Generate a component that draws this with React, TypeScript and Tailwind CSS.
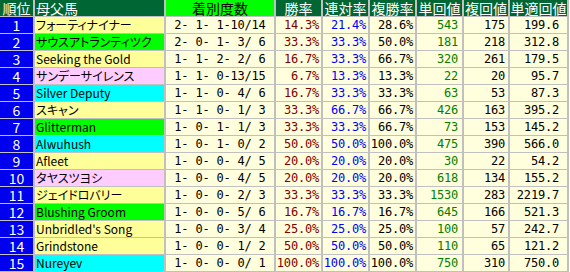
import React from 'react';

type Row = {
  name: string;
  bg: string;
  rec: string;
  win: string;
  ren: string;
  fuku: string;
  tan: string;
  fkv: string;
  tekiv: string;
};

const rows: Row[] = [
  { name: 'フォーティナイナー', bg: 'bg-[#ffff99]', rec: '2- 1- 1-10/14', win: '14.3%', ren: '21.4%', fuku: '28.6%', tan: '543', fkv: '175', tekiv: '199.6' },
  { name: 'サウスアトランティツク', bg: 'bg-[#00ff00]', rec: '2- 0- 1- 3/ 6', win: '33.3%', ren: '33.3%', fuku: '50.0%', tan: '181', fkv: '218', tekiv: '312.8' },
  { name: 'Seeking the Gold', bg: 'bg-[#ffff99]', rec: '1- 1- 2- 2/ 6', win: '16.7%', ren: '33.3%', fuku: '66.7%', tan: '320', fkv: '261', tekiv: '179.5' },
  { name: 'サンデーサイレンス', bg: 'bg-[#ffccff]', rec: '1- 1- 0-13/15', win: '6.7%', ren: '13.3%', fuku: '13.3%', tan: '22', fkv: '20', tekiv: '95.7' },
  { name: 'Silver Deputy', bg: 'bg-[#00ffff]', rec: '1- 1- 0- 4/ 6', win: '16.7%', ren: '33.3%', fuku: '33.3%', tan: '63', fkv: '53', tekiv: '87.3' },
  { name: 'スキャン', bg: 'bg-[#ffff99]', rec: '1- 1- 0- 1/ 3', win: '33.3%', ren: '66.7%', fuku: '66.7%', tan: '426', fkv: '163', tekiv: '395.2' },
  { name: 'Glitterman', bg: 'bg-[#00ff00]', rec: '1- 0- 1- 1/ 3', win: '33.3%', ren: '33.3%', fuku: '66.7%', tan: '73', fkv: '153', tekiv: '145.2' },
  { name: 'Alwuhush', bg: 'bg-[#00ffff]', rec: '1- 0- 1- 0/ 2', win: '50.0%', ren: '50.0%', fuku: '100.0%', tan: '475', fkv: '390', tekiv: '566.0' },
  { name: 'Afleet', bg: 'bg-[#ffff99]', rec: '1- 0- 0- 4/ 5', win: '20.0%', ren: '20.0%', fuku: '20.0%', tan: '30', fkv: '22', tekiv: '54.2' },
  { name: 'タヤスツヨシ', bg: 'bg-[#ffccff]', rec: '1- 0- 0- 4/ 5', win: '20.0%', ren: '20.0%', fuku: '20.0%', tan: '618', fkv: '134', tekiv: '155.2' },
  { name: 'ジェイドロバリー', bg: 'bg-[#ffff99]', rec: '1- 0- 0- 2/ 3', win: '33.3%', ren: '33.3%', fuku: '33.3%', tan: '1530', fkv: '283', tekiv: '2219.7' },
  { name: 'Blushing Groom', bg: 'bg-[#00ff00]', rec: '1- 0- 0- 5/ 6', win: '16.7%', ren: '16.7%', fuku: '16.7%', tan: '645', fkv: '166', tekiv: '521.3' },
  { name: "Unbridled's Song", bg: 'bg-[#ffff99]', rec: '1- 0- 0- 3/ 4', win: '25.0%', ren: '25.0%', fuku: '25.0%', tan: '100', fkv: '57', tekiv: '242.7' },
  { name: 'Grindstone', bg: 'bg-[#ffff99]', rec: '1- 0- 0- 1/ 2', win: '50.0%', ren: '50.0%', fuku: '50.0%', tan: '110', fkv: '65', tekiv: '121.2' },
  { name: 'Nureyev', bg: 'bg-[#00ffff]', rec: '1- 0- 0- 0/ 1', win: '100.0%', ren: '100.0%', fuku: '100.0%', tan: '750', fkv: '310', tekiv: '750.0' },
];

const jp = "font-['Noto_Sans_CJK_JP',sans-serif] overflow-hidden whitespace-nowrap";
const mono = "font-['DejaVu_Sans_Mono',monospace] text-[12px] tracking-[-0.2px] whitespace-pre overflow-hidden";
const head = `${jp} h-[16px] bg-[#006633] text-white text-[14px] leading-[16px] text-center`;
const num = `${mono} h-[16px] bg-[#ffffdd] leading-[16px] text-right pr-[2px]`;

export default function App() {
  return (
    <div className="w-[569px] bg-[#c0c0c0] grid grid-cols-[33px_129px_108px_45px_45px_45px_45px_44px_57px] gap-x-[2px] gap-y-[1px] pb-[1px]">
      {/* ヘッダー */}
      <div className={head}>順位</div>
      <div className={`${head} text-left pl-[1px]`}>母父馬</div>
      <div className={`${jp} h-[16px] bg-[#00ff00] text-black text-[14px] leading-[16px] text-center`}>着別度数</div>
      <div className={head}>勝率</div>
      <div className={head}>連対率</div>
      <div className={head}>複勝率</div>
      <div className={head}>単回値</div>
      <div className={head}>複回値</div>
      <div className={head}>単適回値</div>

      {rows.map((r, i) => (
        <React.Fragment key={i}>
          <div className={`${jp} h-[16px] bg-[#0000ee] text-white text-[14px] leading-[16px] text-center`}>{i + 1}</div>
          <div className={`${jp} ${r.bg} h-[16px] text-black text-[12px] leading-[16px] pl-[1px] [font-feature-settings:'palt']`}>{r.name}</div>
          <div className={`${mono} h-[16px] bg-[#ffffdd] leading-[16px] text-center`}>{r.rec}</div>
          <div className={`${num} text-[#800000]`}>{r.win}</div>
          <div className={`${num} text-[#0000ff]`}>{r.ren}</div>
          <div className={`${num} text-black`}>{r.fuku}</div>
          <div className={`${num} text-[#008000] pr-[4px]`}>{r.tan}</div>
          <div className={`${num} text-black pr-[3px]`}>{r.fkv}</div>
          <div className={`${num} text-black pr-[8px]`}>{r.tekiv}</div>
        </React.Fragment>
      ))}
    </div>
  );
}
